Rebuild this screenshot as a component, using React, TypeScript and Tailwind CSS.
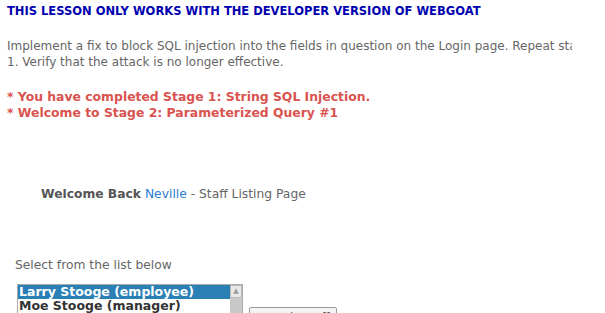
import React from 'react';

const staff = [
  'Larry Stooge (employee)',
  'Moe Stooge (manager)',
  'Curly Stooge (employee)',
  'Eric Walker (employee)',
];

const App: React.FC = () => {
  return (
    <div className="w-[605px] h-[313px] overflow-hidden bg-white font-['DejaVu_Sans',sans-serif]">
      <div className="w-[572px] overflow-hidden pl-[7px] pt-[4px]">
        <h1 className="text-[11.5px] font-bold text-[#0000b0] leading-[14px] whitespace-nowrap">
          THIS LESSON ONLY WORKS WITH THE DEVELOPER VERSION OF WEBGOAT
        </h1>

        <div className="mt-[20px] text-[12px] leading-[16px] text-[#666] whitespace-nowrap">
          <p>Implement a fix to block SQL injection into the fields in question on the Login page. Repeat stage</p>
          <p>1. Verify that the attack is no longer effective.</p>
        </div>

        <div className="mt-[19px] text-[12.4px] font-bold leading-[16px] text-[#d9534f] whitespace-nowrap">
          <p>* You have completed Stage 1: String SQL Injection.</p>
          <p>* Welcome to Stage 2: Parameterized Query #1</p>
        </div>

        <div className="mt-[65px] pl-[34px] text-[12.3px] leading-[16px] text-[#666]">
          <span className="font-bold text-[#555]">Welcome Back</span>{' '}
          <span className="text-[#2a7bd0]">Neville</span> - Staff Listing Page
        </div>

        <div className="mt-[55px] pl-[8px] text-[12.3px] leading-[16px] text-[#666]">
          Select from the list below
        </div>

        <div className="mt-[11px] pl-[10px] flex items-start gap-[6px]">
          <div className="w-[226px] h-[60px] border border-[#aaa] flex overflow-hidden">
            <div className="flex-1 text-[12.5px] font-bold leading-[14px] text-[#333]">
              {staff.map((s, i) => (
                <div key={s} className={i === 0 ? 'bg-[#2a7fb5] text-white pl-[1px]' : 'pl-[1px]'}>
                  {s}
                </div>
              ))}
            </div>
            <div className="w-[12px] bg-[#c8c8c8] flex flex-col">
              <div className="h-[13px] bg-[#e8e8e8] border border-[#bbb] flex items-center justify-center text-[7px] text-[#999]">▲</div>
            </div>
          </div>
          <button className="mt-[23px] h-[22px] w-[88px] border border-[#999] rounded-[2px] bg-[#f4f4f4] text-[12px] text-[#555]">
            Search Staff
          </button>
        </div>
      </div>
    </div>
  );
};

export default App;
